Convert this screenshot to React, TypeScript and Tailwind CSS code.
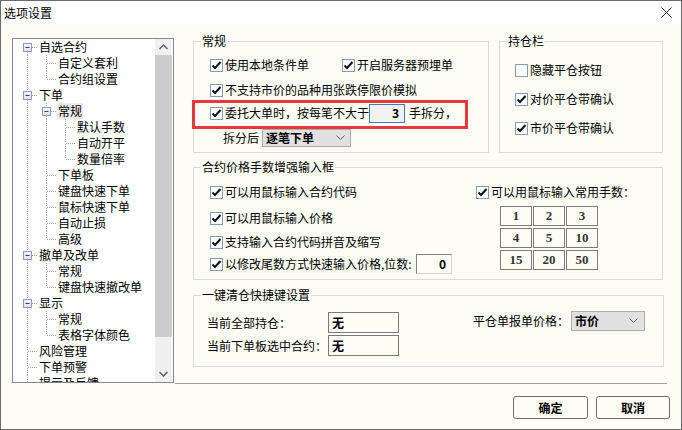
import React from 'react';

type Node = { label: string; children?: Node[]; selected?: boolean; more?: boolean };
type Row = { label: string; level: number; guides: boolean[]; hasNext: boolean; first: boolean; expandable: boolean; selected?: boolean };

const tree: Node[] = [
  { label: '自选合约', children: [{ label: '自定义套利' }, { label: '合约组设置' }] },
  {
    label: '下单',
    children: [
      { label: '常规', selected: true, children: [{ label: '默认手数' }, { label: '自动开平' }, { label: '数量倍率' }] },
      { label: '下单板' },
      { label: '键盘快速下单' },
      { label: '鼠标快速下单' },
      { label: '自动止损' },
      { label: '高级' },
    ],
  },
  { label: '撤单及改单', children: [{ label: '常规' }, { label: '键盘快速撤改单' }] },
  { label: '显示', children: [{ label: '常规' }, { label: '表格字体颜色' }] },
  { label: '风险管理' },
  { label: '下单预警' },
  { label: '提示及反馈', more: true },
];

function flatten(nodes: Node[], level: number, guides: boolean[], out: Row[]) {
  nodes.forEach((n, i) => {
    const hasNext = i < nodes.length - 1 || !!n.more;
    out.push({ label: n.label, level, guides, hasNext, first: level === 0 && i === 0, expandable: !!n.children, selected: n.selected });
    if (n.children) flatten(n.children, level + 1, [...guides, hasNext], out);
  });
  return out;
}

const rows = flatten(tree, 0, [], []);

function TreeRow({ r }: { r: Row }) {
  return (
    <div className="flex h-[16px] shrink-0 items-stretch">
      <div className="w-[5px] shrink-0" />
      {r.guides.map((g, i) => (
        <svg key={i} width="19" height="16" className="shrink-0">
          {g && <line x1="9.5" y1="0" x2="9.5" y2="16" stroke="#a0a0a0" strokeDasharray="1 1" />}
        </svg>
      ))}
      <svg width="19" height="16" className="shrink-0">
        {!r.first && <line x1="9.5" y1="0" x2="9.5" y2="8" stroke="#a0a0a0" strokeDasharray="1 1" />}
        {r.hasNext && <line x1="9.5" y1="9" x2="9.5" y2="16" stroke="#a0a0a0" strokeDasharray="1 1" />}
        <line x1="10" y1="8.5" x2="19" y2="8.5" stroke="#a0a0a0" strokeDasharray="1 1" />
        {r.expandable && (
          <g>
            <defs>
              <linearGradient id="bx" x1="0" y1="0" x2="0" y2="1">
                <stop offset="0" stopColor="#ffffff" />
                <stop offset="1" stopColor="#d8dce4" />
              </linearGradient>
            </defs>
            <rect x="5.5" y="4.5" width="8" height="8" fill="url(#bx)" stroke="#8f9db5" />
            <line x1="7.5" y1="8.5" x2="11.5" y2="8.5" stroke="#1f3f8f" />
          </g>
        )}
      </svg>
      <span className={`ml-[1px] whitespace-nowrap px-[1px] text-[12px] leading-[16px] text-black ${r.selected ? 'bg-[#ececec]' : ''}`}>{r.label}</span>
    </div>
  );
}

function Check({ checked = true }: { checked?: boolean }) {
  return (
    <span className="flex h-[13px] w-[13px] shrink-0 items-center justify-center border border-[#7f9db9] bg-white">
      {checked && (
        <svg width="11" height="11" viewBox="0 0 11 11">
          <polyline points="1.5,5.5 4,8 9.5,2" fill="none" stroke="#111" strokeWidth="2" />
        </svg>
      )}
    </span>
  );
}

function CheckRow({ label, checked = true, className = '' }: { label: React.ReactNode; checked?: boolean; className?: string }) {
  return (
    <div className={`flex h-[20px] items-center ${className}`}>
      <Check checked={checked} />
      <span className="ml-[2px] whitespace-nowrap text-[12px] leading-[14px]">{label}</span>
    </div>
  );
}

function Chevron() {
  return (
    <svg width="9" height="6" viewBox="0 0 9 6">
      <polyline points="0.5,0.5 4.5,4.5 8.5,0.5" fill="none" stroke="#606060" strokeWidth="1" />
    </svg>
  );
}

function Group({ label, className = '', children }: { label: string; className?: string; children?: React.ReactNode }) {
  return (
    <div className={`relative shrink-0 border border-[#d9dcdc] ${className}`}>
      <span className="absolute -top-[8px] left-[7px] bg-[#fdfdf5] px-[1px] text-[12px] leading-[14px] whitespace-nowrap">{label}</span>
      {children}
    </div>
  );
}

export default function App() {
  return (
    <div className="flex h-[430px] w-[682px] flex-col overflow-hidden border border-[#6b6b6b] bg-[#fdfdf5] font-['Noto_Sans_CJK_SC',sans-serif] text-[12px] text-black">
      {/* title bar */}
      <div className="flex h-[23px] shrink-0 items-center justify-between bg-white">
        <span className="ml-[3px] text-[12px] leading-[14px]">选项设置</span>
        <svg width="11" height="11" viewBox="0 0 11 11" className="mr-[9px]">
          <line x1="0.5" y1="0.5" x2="10.5" y2="10.5" stroke="#222" strokeWidth="1" />
          <line x1="10.5" y1="0.5" x2="0.5" y2="10.5" stroke="#222" strokeWidth="1" />
        </svg>
      </div>

      {/* body */}
      <div className="flex flex-1 flex-col">
        <div className="flex items-start">
          {/* tree */}
          <div className="ml-[11px] mt-[14px] flex h-[345px] w-[162px] shrink-0 border border-[#828790] bg-white">
            <div className="flex flex-1 flex-col overflow-hidden">
              {rows.map((r, i) => (
                <TreeRow key={i} r={r} />
              ))}
            </div>
            <div className="mr-[1px] flex w-[17px] shrink-0 flex-col bg-[#f0f0f0]">
              <div className="flex h-[16px] items-center justify-center">
                <svg width="9" height="6" viewBox="0 0 9 6">
                  <polyline points="0.5,5 4.5,1 8.5,5" fill="none" stroke="#606060" strokeWidth="1.5" />
                </svg>
              </div>
              <div className="h-[282px] bg-[#cdcdcd]" />
              <div className="flex-1" />
              <div className="flex h-[17px] items-center justify-center">
                <svg width="9" height="6" viewBox="0 0 9 6">
                  <polyline points="0.5,1 4.5,5 8.5,1" fill="none" stroke="#606060" strokeWidth="1.5" />
                </svg>
              </div>
            </div>
          </div>

          {/* right column */}
          <div className="ml-[1px] flex w-[492px] shrink-0 flex-col pt-[17px]">
            <div className="flex pl-[18px]">
              {/* 常规 */}
              <Group label="常规" className="h-[112px] w-[296px]">
                <div className="flex flex-col pl-[16px] pt-[13px]">
                  <div className="flex h-[20px] items-center">
                    <CheckRow label="使用本地条件单" className="w-[132px]" />
                    <CheckRow label="开启服务器预埋单" />
                  </div>
                  <CheckRow label="不支持市价的品种用张跌停限价模拟" className="mt-[5px]" />
                  <div className="mt-[3px] flex h-[20px] items-center">
                    <Check />
                    <span className="ml-[2px] whitespace-nowrap leading-[14px]">委托大单时，按每笔不大于</span>
                    <span className="flex h-[19px] w-[36px] items-center justify-end border border-[#3c7fc0] bg-[#f2f2f2] pr-[5px] font-bold text-[12px]">3</span>
                    <span className="ml-[4px] whitespace-nowrap leading-[14px]">手拆分，</span>
                  </div>
                  <div className="mt-[5px] flex h-[20px] items-center pl-[13px]">
                    <span className="whitespace-nowrap leading-[14px]">拆分后</span>
                    <span className="ml-[3px] flex h-[18px] w-[89px] items-center justify-between border border-[#adadad] bg-[#e1e1e1] pl-[3px] pr-[5px]">
                      <span className="font-bold leading-[14px]">逐笔下单</span>
                      <Chevron />
                    </span>
                  </div>
                </div>
                <div className="absolute left-[-2px] top-[58px] h-[29px] w-[276px] border-[3px] border-[#e8383a]" />
              </Group>

              {/* 持仓栏 */}
              <Group label="持仓栏" className="ml-[10px] h-[112px] w-[164px]">
                <div className="flex flex-col gap-[9px] pl-[15px] pt-[18px]">
                  <CheckRow label="隐藏平仓按钮" checked={false} />
                  <CheckRow label="对价平仓带确认" />
                  <CheckRow label="市价平仓带确认" />
                </div>
              </Group>
            </div>

            {/* 合约价格手数增强输入框 */}
            <div className="mt-[14px] pl-[18px]">
              <Group label="合约价格手数增强输入框" className="h-[113px] w-[470px]">
                <div className="flex">
                  <div className="flex w-[282px] shrink-0 flex-col pl-[16px] pt-[14px]">
                    <CheckRow label="可以用鼠标输入合约代码" />
                    <CheckRow label="可以用鼠标输入价格" className="mt-[6px]" />
                    <CheckRow label="支持输入合约代码拼音及缩写" className="mt-[4px]" />
                    <div className="mt-[2px] flex h-[20px] items-center">
                      <Check />
                      <span className="ml-[2px] w-[191px] shrink-0 whitespace-nowrap leading-[14px]">以修改尾数方式快速输入价格,位数:</span>
                      <span className="flex h-[20px] w-[36px] shrink-0 items-center justify-end border border-b-[#d4d4d4] border-l-[#808080] border-r-[#d4d4d4] border-t-[#808080] bg-[#fdfdf5] pr-[5px] font-bold">0</span>
                    </div>
                  </div>
                  <div className="flex flex-col pt-[14px]">
                    <CheckRow label="可以用鼠标输入常用手数：" />
                    <div className="ml-[24px] mt-[4px] grid w-[98px] grid-cols-3 gap-x-[1px] gap-y-[2px]">
                      {['1', '2', '3', '4', '5', '10', '15', '20', '50'].map((n) => (
                        <span key={n} className="flex h-[20px] w-[32px] items-center justify-center border border-[#7b7b7b] font-['Liberation_Serif',serif] text-[13px] font-bold text-[#333]">
                          {n}
                        </span>
                      ))}
                    </div>
                  </div>
                </div>
              </Group>
            </div>

            {/* 一键清仓快捷键设置 */}
            <div className="mt-[15px] pl-[18px]">
              <Group label="一键清仓快捷键设置" className="h-[72px] w-[471px]">
                <div className="flex">
                  <div className="flex w-[279px] shrink-0 flex-col gap-[2px] pl-[13px] pt-[16px]">
                    <div className="flex h-[21px] items-center">
                      <span className="w-[121px] whitespace-nowrap leading-[14px]">当前全部持仓：</span>
                      <span className="flex h-[21px] w-[71px] items-center border border-[#7a7a7a] bg-[#fdfdf5] pl-[3px] font-bold">无</span>
                    </div>
                    <div className="flex h-[21px] items-center">
                      <span className="w-[121px] whitespace-nowrap leading-[14px]">当前下单板选中合约：</span>
                      <span className="flex h-[21px] w-[71px] items-center border border-[#7a7a7a] bg-[#fdfdf5] pl-[3px] font-bold">无</span>
                    </div>
                  </div>
                  <div className="mt-[15px] flex h-[20px] items-center">
                    <span className="whitespace-nowrap leading-[14px]">平仓单报单价格：</span>
                    <span className="ml-[2px] flex h-[20px] w-[74px] items-center justify-between border border-[#adadad] bg-[#e1e1e1] pl-[3px] pr-[6px]">
                      <span className="font-bold leading-[14px]">市价</span>
                      <Chevron />
                    </span>
                  </div>
                </div>
              </Group>
            </div>

            <div className="mt-[16px] h-[1px] w-[492px] bg-[#a0a0a0]" />
          </div>
        </div>

        {/* buttons */}
        <div className="mt-[12px] flex justify-end gap-[8px] pr-[11px]">
          <button className="flex h-[23px] w-[75px] items-center justify-center rounded-[3px] border border-[#6e6e6e] bg-[#fdfdf5] font-bold leading-[14px]">确定</button>
          <button className="flex h-[23px] w-[74px] items-center justify-center rounded-[3px] border border-[#6e6e6e] bg-[#fdfdf5] font-bold leading-[14px]">取消</button>
        </div>
      </div>
    </div>
  );
}
